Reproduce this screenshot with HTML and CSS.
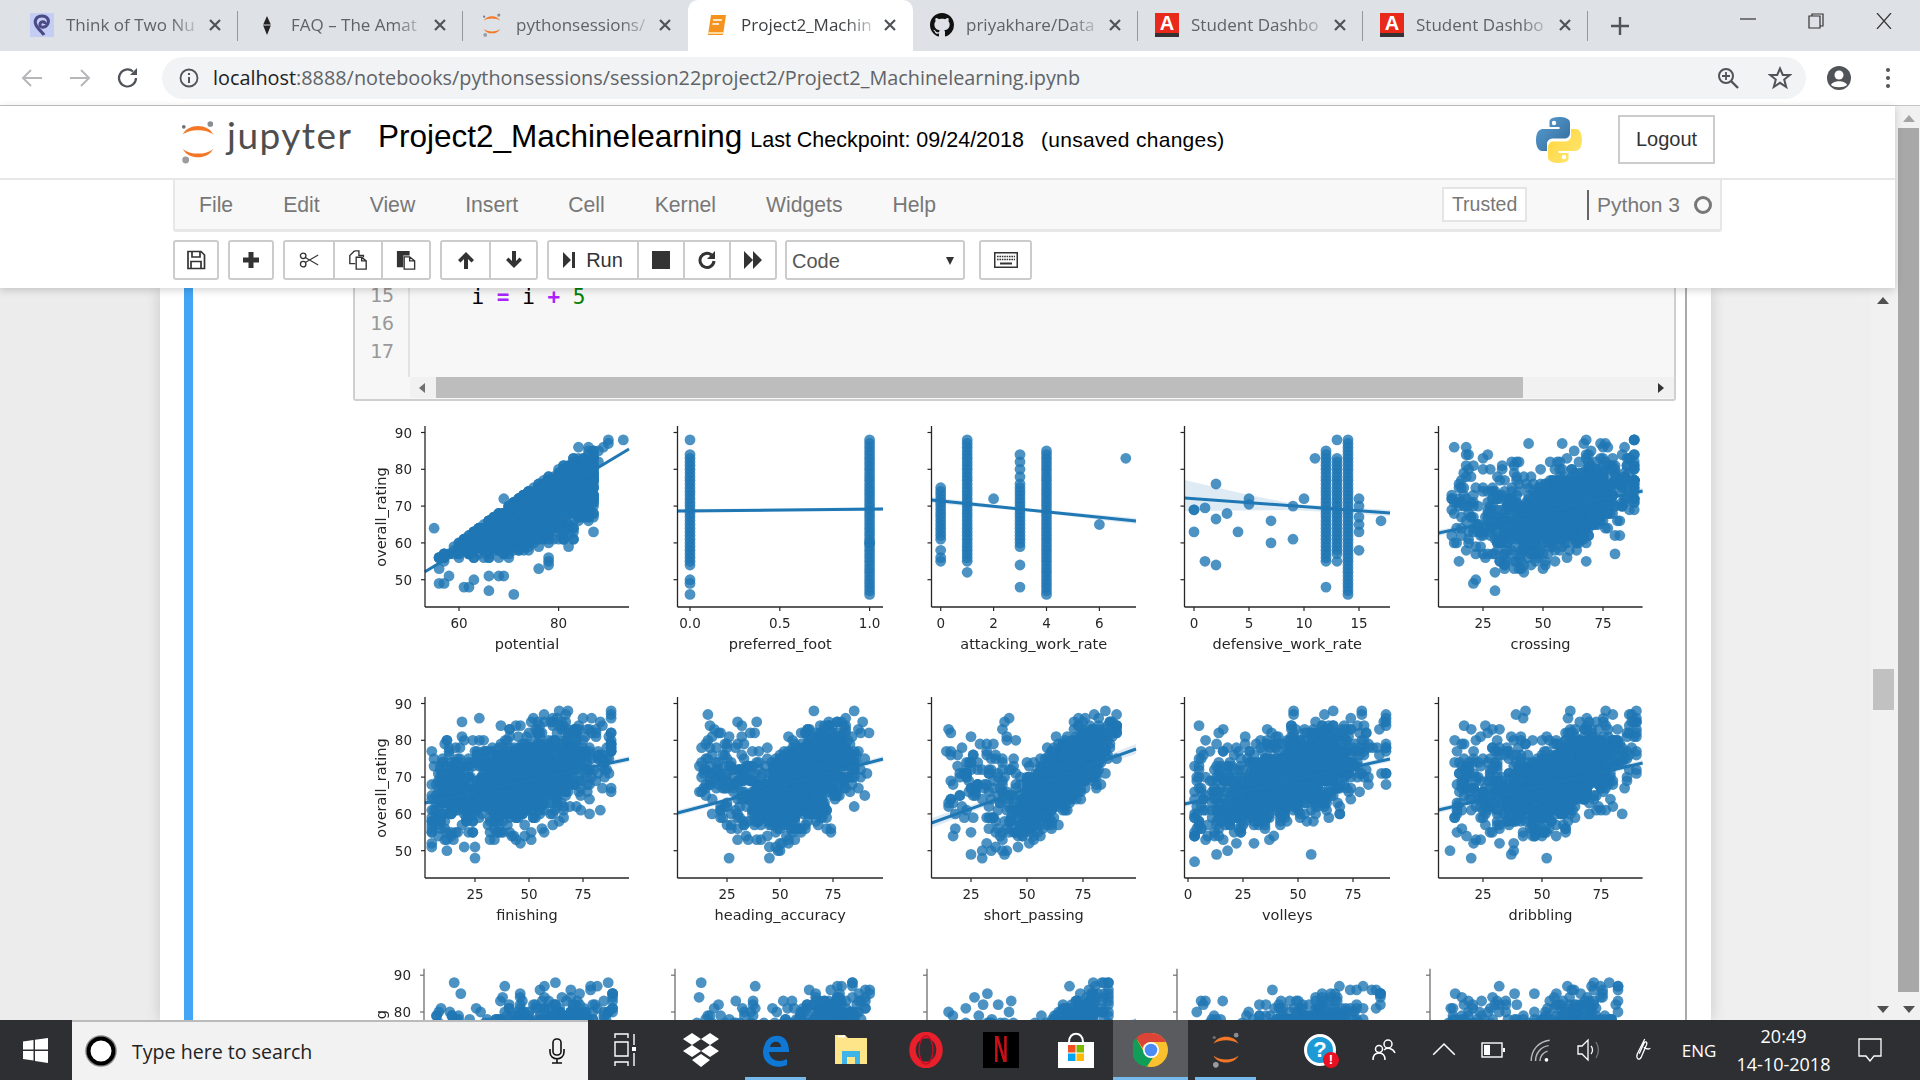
FILE: index.html
```html
<!DOCTYPE html>
<html lang="en">
<head>
<meta charset="utf-8">
<title>Project2_Machinelearning</title>
<link rel="stylesheet" href="styles.css">
</head>
<body>
<svg class="defs" aria-hidden="true">
  <symbol id="jup" viewBox="0 0 38 46">
    <path d="M3 15C8 3 30 3 35 15C28 9 10 9 3 15Z" fill="#f37726"/>
    <path d="M3 30C8 42 30 42 35 30C28 37 10 37 3 30Z" fill="#f37726"/>
    <circle cx="32" cy="4" r="3" fill="#8a8d90"/><circle cx="4" cy="7" r="2" fill="#6f7275"/><circle cx="6" cy="42" r="3.6" fill="#9a9c9f"/>
  </symbol>
  <symbol id="x" viewBox="0 0 14 14"><path d="M2 2L12 12M12 2L2 12" fill="none" stroke="#505358" stroke-width="2.2"/></symbol>
</svg>
<div class="screen">
  <div class="tabstrip">
    <div class="tab">
      <svg class="fav" viewBox="0 0 24 24"><rect width="24" height="24" fill="#c4cdf3"/><path d="M12 3C6 3 4 8 6 12s7 8 8 10M12 3c6 0 8 5 5 9s-8 2-7-1 5-3 5 0" fill="none" stroke="#4b4a86" stroke-width="3"/></svg>
      <span class="tab-title">Think of Two Nu</span><svg class="tab-x"><use href="#x"/></svg>
    </div>
    <div class="tab">
      <svg class="fav" viewBox="0 0 24 24"><path d="M12 3L16 12L12 22L8 12Z" fill="#222"/><path d="M8 12H16" stroke="#ddd" stroke-width="1"/></svg>
      <span class="tab-title">FAQ – The Amat</span><svg class="tab-x"><use href="#x"/></svg>
    </div>
    <div class="tab">
      <svg class="fav"><use href="#jup"/></svg>
      <span class="tab-title">pythonsessions/</span><svg class="tab-x"><use href="#x"/></svg>
    </div>
    <div class="tab tab-active">
      <svg class="fav" viewBox="0 0 24 24"><path d="M6 2H21L18 22H3Z" fill="#f5931e"/><path d="M8 7H17M7.400 11H14" stroke="#fff" stroke-width="1.500"/><path d="M3 20H18" stroke="#fdd9a0" stroke-width="2"/></svg>
      <span class="tab-title">Project2_Machin</span><svg class="tab-x"><use href="#x"/></svg>
    </div>
    <div class="tab">
      <svg class="fav" viewBox="0 0 16 16"><path fill="#111" d="M8 0C3.58 0 0 3.58 0 8c0 3.54 2.29 6.53 5.47 7.59.4.07.55-.17.55-.38 0-.19-.01-.82-.01-1.49-2.01.37-2.53-.49-2.69-.94-.09-.23-.48-.94-.82-1.13-.28-.15-.68-.52-.01-.53.63-.01 1.08.58 1.23.82.72 1.21 1.87.87 2.33.66.07-.52.28-.87.51-1.07-1.78-.2-3.64-.89-3.64-3.95 0-.87.31-1.59.82-2.15-.08-.2-.36-1.02.08-2.12 0 0 .67-.21 2.2.82.64-.18 1.32-.27 2-.27.68 0 1.36.09 2 .27 1.53-1.04 2.2-.82 2.2-.82.44 1.1.16 1.92.08 2.12.51.56.82 1.27.82 2.15 0 3.07-1.87 3.75-3.65 3.95.29.25.54.73.54 1.48 0 1.07-.01 1.93-.01 2.2 0 .21.15.46.55.38A8.013 8.013 0 0016 8c0-4.42-3.58-8-8-8z"/></svg>
      <span class="tab-title">priyakhare/Data</span><svg class="tab-x"><use href="#x"/></svg>
    </div>
    <div class="tab">
      <span class="fav fav-a">A</span>
      <span class="tab-title">Student Dashbo</span><svg class="tab-x"><use href="#x"/></svg>
    </div>
    <div class="tab">
      <span class="fav fav-a">A</span>
      <span class="tab-title">Student Dashbo</span><svg class="tab-x"><use href="#x"/></svg>
    </div>
    <svg class="newtab" viewBox="0 0 18 18"><path d="M9 0V18M0 9H18" stroke="#505358" stroke-width="2.400"/></svg>
    <div class="winctl">
      <svg class="win-i" viewBox="0 0 16 16"><path d="M0 6H16" stroke="#333" stroke-width="1.200"/></svg>
      <svg class="win-i" viewBox="0 0 16 16"><path d="M4 3V1H15V13H12M1 3H12V15H1Z" fill="none" stroke="#333" stroke-width="1.200"/></svg>
      <svg class="win-i" viewBox="0 0 16 16"><path d="M1 0L15 16M15 0L1 16" stroke="#333" stroke-width="1.200"/></svg>
    </div>
  </div>

  <div class="addressbar">
    <svg class="nav-i" viewBox="0 0 24 24"><path d="M22 12H4M11 4L3 12L11 20" fill="none" stroke="#b5b7ba" stroke-width="2"/></svg>
    <svg class="nav-i" viewBox="0 0 24 24"><path d="M2 12H20M13 4L21 12L13 20" fill="none" stroke="#b5b7ba" stroke-width="2"/></svg>
    <svg class="nav-i" viewBox="0 0 24 24"><path d="M20 12A8.500 8.500 0 1 1 17 5.500" fill="none" stroke="#505358" stroke-width="2.200"/><path d="M21 2V9H14Z" fill="#505358"/></svg>
    <div class="omnibox">
      <svg class="info-i" viewBox="0 0 20 20"><circle cx="10" cy="10" r="8.500" fill="none" stroke="#505358" stroke-width="1.800"/><path d="M10 9V15M10 5V7" stroke="#505358" stroke-width="2"/></svg>
      <span class="url"><span class="url-host">localhost</span>:8888/notebooks/pythonsessions/session22project2/Project2_Machinelearning.ipynb</span>
      <svg class="omni-i" viewBox="0 0 24 24"><circle cx="10" cy="10" r="7" fill="none" stroke="#505358" stroke-width="2"/><path d="M15 15L22 22" stroke="#505358" stroke-width="2.400"/><path d="M10 6V14M6 10H14" stroke="#505358" stroke-width="1.800"/></svg>
      <svg class="omni-i" viewBox="0 0 24 24"><path d="M12 2.500L14.800 9H21.800L16.200 13.500L18.200 21L12 16.800L5.800 21L7.800 13.500L2.200 9H9.200Z" fill="none" stroke="#505358" stroke-width="2"/></svg>
    </div>
    <svg class="profile-i" viewBox="0 0 26 26"><circle cx="13" cy="13" r="12" fill="#505358"/><circle cx="13" cy="10" r="4.500" fill="#fff"/><path d="M5 20C7 15 19 15 21 20C18 23 8 23 5 20Z" fill="#fff"/></svg>
    <svg class="menu-i" viewBox="0 0 6 22"><circle cx="3" cy="3" r="2" fill="#505358"/><circle cx="3" cy="11" r="2" fill="#505358"/><circle cx="3" cy="19" r="2" fill="#505358"/></svg>
  </div>

  <div class="viewport">
    <div class="content">
      <header class="nbhead">
        <div class="titlebar">
          <div class="logo">
            <svg class="logo-mark"><use href="#jup"/></svg>
            <span class="logo-text">jupyter</span>
          </div>
          <span class="nbname">Project2_Machinelearning</span>
          <span class="checkpoint">Last Checkpoint: 09/24/2018</span>
          <span class="autosave">(unsaved changes)</span>
          <svg class="pylogo" viewBox="0 0 46 46">
            <defs>
              <linearGradient id="pyb" x1="0" y1="0" x2="1" y2="1"><stop offset="0" stop-color="#5a9fd4"/><stop offset="1" stop-color="#306998"/></linearGradient>
              <linearGradient id="pyy" x1="0" y1="0" x2="1" y2="1"><stop offset="0" stop-color="#ffe873"/><stop offset="1" stop-color="#ffd43b"/></linearGradient>
            </defs>
            <path fill="url(#pyb)" d="M23 0C13 0 13.500 4.500 13.500 4.500V10H23.500V12H7S0 11.500 0 23C0 34 6 34 6 34H11V27.500S10.500 21.500 17 21.500H28S34 21.800 34 16V6S35 0 23 0Z"/>
            <circle cx="18" cy="6" r="2.200" fill="#fff"/>
            <path fill="url(#pyy)" transform="rotate(180 23 23)" d="M23 0C13 0 13.500 4.500 13.500 4.500V10H23.500V12H7S0 11.500 0 23C0 34 6 34 6 34H11V27.500S10.500 21.500 17 21.500H28S34 21.800 34 16V6S35 0 23 0Z"/>
            <circle cx="28" cy="40" r="2.200" fill="#fff"/>
          </svg>
          <span class="logout">Logout</span>
        </div>
        <nav class="menubar">
          <span class="menu-item menu-file">File</span>
          <span class="menu-item">Edit</span>
          <span class="menu-item">View</span>
          <span class="menu-item">Insert</span>
          <span class="menu-item">Cell</span>
          <span class="menu-item">Kernel</span>
          <span class="menu-item">Widgets</span>
          <span class="menu-item">Help</span>
          <span class="trusted">Trusted</span>
          <span class="kernel-name">Python 3</span>
          <span class="kernel-dot"></span>
        </nav>
        <div class="toolbar">
          <div class="btn-group"><span class="tbtn tbtn-46"><svg class="ti" viewBox="0 0 20 20"><path d="M2 1.500H15L18.500 5V18.500H2Z M6 1.500V7H14V1.500 M5 18.500V11.500H15V18.500" fill="none" stroke="#333" stroke-width="1.700"/></svg></span></div>
          <div class="btn-group"><span class="tbtn tbtn-46"><svg class="ti" viewBox="0 0 20 20"><path d="M10 2V18M2 10H18" stroke="#333" stroke-width="5"/></svg></span></div>
          <div class="btn-group">
            <span class="tbtn tbtn-49"><svg class="ti" viewBox="0 0 24 20"><circle cx="5" cy="5" r="3.300" fill="none" stroke="#333" stroke-width="1.600"/><circle cx="5" cy="15" r="3.300" fill="none" stroke="#333" stroke-width="1.600"/><path d="M7.500 7L23 16M7.500 13L23 4" stroke="#333" stroke-width="1.300"/></svg></span>
            <span class="tbtn tbtn-49"><svg class="ti" viewBox="0 0 22 22"><path d="M7 1H12V6H17V8M7 1L2 6V15H8" fill="none" stroke="#333" stroke-width="1.500"/><path d="M9 8H15L20 12V21H9Z M15 8V12H20" fill="#fff" stroke="#333" stroke-width="1.500"/></svg></span>
            <span class="tbtn tbtn-49"><svg class="ti" viewBox="0 0 22 22"><path d="M1 1H15V6H8V19H1Z" fill="#333"/><path d="M9 7.500H15L20.500 12V21H9Z M15 7.500V12H20.500" fill="#fff" stroke="#333" stroke-width="1.500"/></svg></span>
          </div>
          <div class="btn-group">
            <span class="tbtn tbtn-48"><svg class="ti" viewBox="0 0 20 20"><path d="M10 2L18 10L15.500 12.500L12 9V19H8V9L4.500 12.500L2 10Z" fill="#333"/></svg></span>
            <span class="tbtn tbtn-48"><svg class="ti" viewBox="0 0 20 20"><path d="M10 18L18 10L15.500 7.500L12 11V1H8V11L4.500 7.500L2 10Z" fill="#333"/></svg></span>
          </div>
          <div class="btn-group">
            <span class="tbtn tbtn-run"><svg class="ti-small" viewBox="0 0 12 18"><path d="M0 1L8 9L0 17Z M9 1H12V17H9Z" fill="#333"/></svg>Run</span>
            <span class="tbtn tbtn-46"><svg class="ti" viewBox="0 0 20 20"><rect x="1" y="1" width="18" height="18" fill="#333"/></svg></span>
            <span class="tbtn tbtn-46"><svg class="ti" viewBox="0 0 20 20"><path d="M17 11A7 7 0 1 1 14.500 5" fill="none" stroke="#333" stroke-width="3"/><path d="M18 1V9H10Z" fill="#333"/></svg></span>
            <span class="tbtn tbtn-46"><svg class="ti" viewBox="0 0 20 20"><path d="M1 1L10 10L1 19Z M10 1L19 10L10 19Z" fill="#333"/></svg></span>
          </div>
          <div class="celltype"><span>Code</span><span class="caret"></span></div>
          <div class="btn-group"><span class="tbtn tbtn-kb"><svg class="ti-kb" viewBox="0 0 24 16"><rect x="0.750" y="0.750" width="22.500" height="14.500" fill="none" stroke="#333" stroke-width="1.500"/><path d="M3 4.500H21M3 7.500H21" stroke="#333" stroke-width="1.600" stroke-dasharray="1.600 .8"/><path d="M6 11.500H18" stroke="#333" stroke-width="2"/></svg></span></div>
        </div>
      </header>

      <main class="page">
        <div class="notebook">
          <div class="cell">
            <div class="codebox">
              <div class="editor">
                <div class="gutter"><div class="gutter-lines"><div>15</div><div>16</div><div>17</div></div></div>
                <div class="code"><div class="code-lines"><div>    i <b class="op">=</b> i <b class="op">+</b> <span class="num">5</span></div><div>&nbsp;</div><div>&nbsp;</div></div></div>
              </div>
              <div class="hscroll">
                <span class="hs-left"></span>
                <span class="hs-thumb"></span>
                <span class="hs-right"></span>
              </div>
            </div>
            <svg id="figure" class="figure" viewBox="353 401 1330 680"></svg>
          </div>
        </div>
        <div class="page-gap"></div>
        <div class="inner-scroll">
          <span class="arrow-up arrow-dark"></span>
          <span class="inner-thumb"></span>
          <span class="arrow-down arrow-dark"></span>
        </div>
      </main>
    </div>
    <div class="outer-scroll">
      <span class="arrow-up arrow-light"></span>
      <span class="outer-thumb"></span>
      <span class="arrow-down arrow-mid"></span>
    </div>
  </div>

  <footer class="taskbar">
    <div class="start"><svg class="win-logo" viewBox="0 0 25 25"><path fill="#fff" d="M0 3.500L10.500 2V11.500H0ZM12 1.800L25 0V11.500H12ZM0 13H10.500V22.500L0 21ZM12 13H25V25L12 23Z"/></svg></div>
    <div class="search">
      <svg class="cortana" viewBox="0 0 34 34"><circle cx="17" cy="17" r="15" fill="#fff" stroke="#888" stroke-width="1.500"/><circle cx="17" cy="17" r="12.500" fill="#fff" stroke="#000" stroke-width="4"/></svg>
      <span class="search-text">Type here to search</span>
      <svg class="mic" viewBox="0 0 20 26"><rect x="6" y="1" width="8" height="16" rx="3.500" fill="none" stroke="#111" stroke-width="1.600"/><path d="M3 11V14C3 23 17 23 17 14V11M10 20V25M5 25H15" fill="none" stroke="#111" stroke-width="1.600"/></svg>
    </div>
    <div class="apps">
      <div class="app"><svg class="app-i" viewBox="0 0 24 36"><path d="M1 6V2H14V6M1 10H14V24H1ZM1 34V30H14V34M20 2V13M20 21V34" fill="none" stroke="#fff" stroke-width="1.400"/><rect x="18" y="15" width="4" height="4" fill="#fff"/></svg></div>
      <div class="app"><svg class="app-i" viewBox="0 0 36 36"><path fill="#fff" d="M9 1L18 7L9 13L0 7ZM27 1L36 7L27 13L18 7ZM9 13L18 19L9 25L0 19ZM27 13L36 19L27 25L18 19ZM18 22L27 28L18 35L9 28Z"/></svg></div>
      <div class="app app-on"><svg class="app-i" viewBox="0 0 32 36"><path d="M5 12C8 2 28 -2 29 18V20H9C10 29 20 31 27 27V33C15 38 3 32 3 20C3 17 4 14 5 12Z" fill="#0f78d4"/><path d="M10 15H21C21 8 11 8 10 15Z" fill="#2d2f33"/></svg></div>
      <div class="app"><svg class="app-i" viewBox="0 0 32 36"><path d="M0 3H10L13 6H32V32H0Z" fill="#ffe58a"/><path d="M3 4.500H10" stroke="#fff" stroke-width="2"/><path d="M7 32V19H25V32H20V25H12V32Z" fill="#3fb4e8"/></svg></div>
      <div class="app"><svg class="app-i" viewBox="0 0 36 36"><ellipse cx="18" cy="18" rx="13.500" ry="15" fill="none" stroke="#e8202c" stroke-width="6.500"/><ellipse cx="18" cy="18" rx="7" ry="14" fill="none" stroke="#c40e22" stroke-width="1.500"/></svg></div>
      <div class="app"><span class="netflix"><span class="netflix-n">N</span></span></div>
      <div class="app"><svg class="app-i" viewBox="0 0 36 36"><path d="M11 10C11 -1 25 -1 25 10" fill="none" stroke="#fff" stroke-width="2"/><rect y="10" width="36" height="26" fill="#fff"/><rect x="10" y="13" width="7.500" height="7.500" fill="#f25022"/><rect x="18.500" y="13" width="7.500" height="7.500" fill="#7fba00"/><rect x="10" y="21.500" width="7.500" height="7.500" fill="#00a4ef"/><rect x="18.500" y="21.500" width="7.500" height="7.500" fill="#ffb900"/></svg></div>
      <div class="app app-chrome"><svg class="app-i" viewBox="0 0 36 36"><circle cx="18" cy="18" r="17" fill="#fbc02d"/><path d="M18 1A17 17 0 0 1 33 10H18C14 10 10 13 9.500 16L3 6A17 17 0 0 1 18 1Z" fill="#db4437"/><path d="M3 6L11 20C12.500 23.500 16 26 20 25.500L14 34.500A17 17 0 0 1 3 6Z" fill="#109d58"/><circle cx="18" cy="18" r="8" fill="#fff"/><circle cx="18" cy="18" r="6.300" fill="#4b8bf5"/></svg></div>
      <div class="app app-on"><svg class="app-i"><use href="#jup"/></svg></div>
    </div>
    <div class="tray">
      <div class="tray-slot"><span class="help">?<span class="help-badge">!</span></span></div>
      <div class="tray-slot"><svg class="tray-i" viewBox="0 0 24 24"><circle cx="16" cy="6" r="4" fill="none" stroke="#fff" stroke-width="1.500"/><circle cx="7" cy="11" r="3.500" fill="none" stroke="#fff" stroke-width="1.500"/><path d="M1 22C1 17 3 15 7 15C11 15 13 17 13 22M12 12C15 9 21 10 23 15" fill="none" stroke="#fff" stroke-width="1.500"/></svg></div>
      <div class="tray-slot"><svg class="tray-i" viewBox="0 0 20 20"><path d="M1 14L10 5L19 14" fill="none" stroke="#fff" stroke-width="1.300"/></svg></div>
      <div class="tray-slot"><svg class="tray-i" viewBox="0 0 24 16"><rect x="1" y="1" width="20" height="14" fill="none" stroke="#fff" stroke-width="1.400"/><rect x="3" y="3" width="6" height="10" fill="#fff"/><rect x="22" y="6" width="2" height="4" fill="#fff"/></svg></div>
      <div class="tray-slot"><svg class="tray-i" viewBox="0 0 20 22"><path d="M1 21C1 11 8 3 18 2M5 21C5 14 10 8 17 7M9 21C9 17 12 13 16 12" fill="none" stroke="#b9babc" stroke-width="1.300"/><circle cx="15" cy="20" r="1.700" fill="#fff"/></svg></div>
      <div class="tray-slot"><svg class="tray-i" viewBox="0 0 24 22"><path d="M1 7H5L11 1V21L5 15H1Z" fill="none" stroke="#fff" stroke-width="1.300"/><path d="M14 7C16 9 16 13 14 15" fill="none" stroke="#fff" stroke-width="1.300"/><path d="M19 3C22 8 22 14 19 19" fill="none" stroke="#777" stroke-width="1.300"/></svg></div>
      <div class="tray-slot"><svg class="tray-i" viewBox="0 0 20 26"><path d="M13 1L5 17C3 22 7 25 9 21L15 7C16 4 13 3 12 6L7 17M12 10C15 12 18 12 19 11" fill="none" stroke="#fff" stroke-width="1.400"/></svg></div>
      <div class="tray-slot tray-lang">ENG</div>
      <div class="clock"><span>20:49</span><span>14-10-2018</span></div>
      <div class="tray-slot"><svg class="tray-note" viewBox="0 0 24 24"><path d="M1 1H23V18H16L12 23L8 18H1Z" fill="none" stroke="#fff" stroke-width="1.300"/></svg></div>
    </div>
  </footer>
</div>
<script src="script.js"></script>
</body>
</html>
```
FILE: styles.css
```css
* { box-sizing: border-box; }
html, body { margin: 0; padding: 0; }
body { font-family: "Liberation Sans", Arial, sans-serif; overflow: hidden; }
.defs { position: absolute; width: 0; height: 0; }
.screen { width: 1920px; height: 1080px; display: flex; flex-direction: column; overflow: hidden; background: #fff; }

/* tabs */
.tabstrip { height: 51px; flex: none; display: flex; align-items: stretch; padding-left: 13px; background: #dee1e6; font-family: "Open Sans", sans-serif; font-size: 17px; color: #5f6368; }
.tab { width: 225px; flex: none; display: flex; align-items: center; padding: 0 16px 2px 17px; position: relative; }
.tab::after { content: ""; position: absolute; right: 0; top: 11px; height: 30px; width: 1px; background: #94979c; }
.tab-active { background: #fff; color: #3c4043; border-radius: 10px 10px 0 0; }
.tab-active::after { display: none; }
.tab:nth-child(3)::after { display: none; }
.fav { width: 24px; height: 24px; flex: none; margin-right: 12px; }
.fav-a { background: #e8291c; color: #fff; font: bold 20px/20px "Liberation Sans", sans-serif; text-align: center; border-bottom: 4px solid #333; }
.tab-title { flex: 1; min-width: 0; white-space: nowrap; -webkit-mask-image: linear-gradient(90deg, #000 80%, rgba(0,0,0,.25)); mask-image: linear-gradient(90deg, #000 80%, rgba(0,0,0,.25)); }
.tab-x { width: 14px; height: 14px; flex: none; margin-left: 12px; }
.newtab { width: 18px; height: 18px; align-self: center; margin-left: 23px; }
.winctl { margin-left: auto; display: flex; gap: 52px; padding: 13px 28px 0 0; }
.win-i { width: 16px; height: 16px; }

/* address */
.addressbar { height: 55px; flex: none; display: flex; align-items: center; padding: 0 0 1px 20px; border-bottom: 1px solid #c4c4c4; background: #fff; }
.nav-i { width: 24px; height: 24px; flex: none; margin-right: 24px; }
.nav-i:nth-child(3) { margin-right: 22px; }
.omnibox { width: 1644px; height: 42px; flex: none; display: flex; align-items: center; border-radius: 21px; background: #f1f3f4; padding: 0 14px 0 17px; }
.info-i { width: 20px; height: 20px; flex: none; margin-right: 14px; }
.url { flex: 1; white-space: nowrap; font-family: "Open Sans", sans-serif; font-size: 19.830px; color: #5f6368; }
.url-host { color: #202124; }
.omni-i { width: 24px; height: 24px; flex: none; margin-left: 28px; }
.profile-i { width: 26px; height: 26px; flex: none; margin-left: 20px; }
.menu-i { width: 6px; height: 22px; flex: none; margin-left: 33px; }

/* main */
.viewport { flex: 1; min-height: 0; display: flex; background: #eee; }
.content { width: 1895px; flex: none; display: flex; flex-direction: column; min-height: 0; position: relative; }
.nbhead { flex: none; height: 182px; background: #fff; position: relative; z-index: 2; box-shadow: 0 2px 8px rgba(0,0,0,.18); }
.titlebar { height: 74px; display: flex; align-items: center; padding-left: 180px; border-bottom: 2px solid #e7e7e7; color: #000; }
.logo { display: flex; align-items: center; width: 198px; flex: none; }
.logo-mark { width: 36px; height: 46px; flex: none; }
.logo-text { margin-left: 11px; font: 400 37px/1 Lato, sans-serif; letter-spacing: 1.500px; color: #4e4e4e; position: relative; top: -8px; }
.nbname { font-size: 31.500px; margin-right: 8px; position: relative; top: -6px; }
.checkpoint { font-size: 21.500px; margin-right: 17px; position: relative; top: -2px; }
.autosave { font-size: 21px; letter-spacing: .3px; position: relative; top: -2px; }
.pylogo { width: 46px; height: 46px; flex: none; margin-left: auto; position: relative; top: -2px; }
.logout { width: 97px; height: 49px; flex: none; margin: -6px 180px 0 36px; border: 2px solid #ccc; text-align: center; line-height: 45px; font-size: 20px; color: #333; }

.menubar { margin-left: 173px; width: 1549px; height: 52px; position: relative; background: #f8f8f8; border: solid #e7e7e7; border-width: 0 2px 3px 2px; border-radius: 0 0 3px 3px; color: #777; font-size: 21.200px; display: flex; align-items: center; }
.menu-item { margin-left: 50px; }
.menu-file { margin-left: 24px; }
.trusted { margin-left: auto; width: 85px; height: 35px; border: 2px solid #e5e5e5; background: #fff; color: #777; text-align: center; line-height: 31px; font-size: 19.500px; }
.kernel-name { margin-left: 60px; padding-left: 8px; border-left: 2px solid #666; height: 30px; line-height: 30px; font-size: 21px; }
.kernel-dot { width: 18px; height: 18px; border: 3px solid #777; border-radius: 50%; margin: 0 8px 0 14px; }

.toolbar { height: 56px; margin-left: 173px; display: flex; align-items: flex-start; padding-top: 8px; gap: 9px; }
.btn-group { display: flex; height: 40px; border: 2px solid #ccc; border-radius: 3px; background: #fff; }
.tbtn { display: flex; align-items: center; justify-content: center; height: 100%; border-left: 2px solid #ccc; color: #333; font-size: 20px; }
.tbtn:first-child { border-left: 0; }
.tbtn-46 { width: 46px; }
.btn-group:nth-child(1) .tbtn-46, .btn-group:nth-child(2) .tbtn-46 { width: 42px; }
.tbtn-49 { width: 48px; }
.tbtn-48 { width: 47px; }
.tbtn-run { width: 88px; gap: 11px; }
.tbtn-kb { width: 49px; }
.ti { width: 20px; height: 20px; }
.ti-small { width: 12px; height: 18px; }
.ti-kb { width: 24px; height: 16px; }
.celltype { width: 180px; height: 40px; margin-left: -1px; display: flex; align-items: center; justify-content: space-between; padding: 2px 9px 0 5px; border: 2px solid #ccc; border-radius: 3px; color: #555; font-size: 20px; }
.caret { width: 0; height: 0; border: solid transparent; border-width: 8px 4.500px 0; border-top-color: #333; }
.btn-group:last-child { margin-left: 5px; }

.page { flex: 1; min-height: 0; display: flex; overflow: hidden; background: linear-gradient(90deg, #ececec, #efefef); }
.notebook { width: 1551px; margin-left: 160px; flex: none; background: #fff; box-shadow: 0 0 14px rgba(0,0,0,.16); padding-left: 24px; }
.cell { width: 1503px; height: 100%; border-left: 9px solid #42a5f5; border-right: 2px solid #aaa; padding-left: 160px; overflow: hidden; }
.codebox { width: 1323px; height: 113px; background: #f7f7f7; border: solid #cfcfcf; border-width: 0 2px 2px 2px; border-radius: 0 0 3px 3px; display: flex; flex-direction: column; }
.editor { height: 89px; flex: none; display: flex; overflow: hidden; }
.gutter { width: 55px; flex: none; border-right: 2px solid #e2e2e2; font: 20px/28px "DejaVu Sans Mono", monospace; color: #999; text-align: right; padding-right: 14px; }
.gutter-lines { margin-top: -7px; }
.code-lines { margin-top: -5px; }
.code { flex: 1; font: 21px/28px "DejaVu Sans Mono", monospace; color: #000; padding-left: 11px; white-space: pre; }
.op { color: #aa22ff; font-weight: 700; }
.num { color: #008000; }
.hscroll { margin-left: 55px; height: 21px; flex: none; background: #f1f1f1; display: flex; align-items: center; }
.hs-left { width: 0; height: 0; border: solid transparent; border-width: 5px 6px 5px 0; border-right-color: #707070; margin-left: 9px; }
.hs-thumb { width: 1087px; height: 21px; background: #bdbdbd; margin-left: 11px; }
.hs-right { width: 0; height: 0; border: solid transparent; border-width: 5px 0 5px 6px; border-left-color: #333; margin-left: 135px; }
.figure { display: block; width: 1330px; height: 680px; filter: blur(.6px); }
.page-gap { width: 160px; flex: none; }

.inner-scroll { width: 24px; flex: none; background: #f1f1f1; display: flex; flex-direction: column; align-items: center; padding: 9px 0 7px; }
.inner-thumb { width: 21px; height: 41px; margin-top: 365px; background: #c1c1c1; }
.outer-scroll { width: 25px; flex: none; background: #f1f1f1; display: flex; flex-direction: column; align-items: center; padding: 9px 0 7px 2px; }
.outer-thumb { width: 21px; height: 864px; margin-top: 6px; background: #a8a8a8; }
.arrow-up, .arrow-down { width: 0; height: 0; flex: none; border: solid transparent; }
.arrow-up { border-width: 0 6px 7px; }
.arrow-down { border-width: 7px 6px 0; margin-top: auto; }
.arrow-dark.arrow-up { border-bottom-color: #505050; }
.arrow-dark.arrow-down { border-top-color: #505050; }
.arrow-light.arrow-up { border-bottom-color: #a3a3a3; }
.arrow-mid.arrow-down { border-top-color: #505050; }

/* taskbar */
.taskbar { height: 60px; flex: none; display: flex; background: #2d2f33; color: #fff; font-family: "Open Sans", sans-serif; }
.start { width: 72px; flex: none; display: flex; align-items: center; padding-left: 23px; }
.win-logo { width: 25px; height: 25px; }
.search { width: 516px; flex: none; display: flex; align-items: center; padding: 0 21px 0 12px; background: #f2f2f2; border-top: 2px solid #bbb; color: #222; font-size: 19.600px; }
.cortana { width: 34px; height: 34px; flex: none; }
.search-text { margin-left: 14px; flex: 1; }
.mic { width: 20px; height: 26px; flex: none; }
.apps { display: flex; flex: none; }
.app { width: 75px; height: 60px; position: relative; display: flex; align-items: center; justify-content: center; }
.app-i { width: 36px; height: 36px; }
.app-on::after { content: ""; position: absolute; bottom: 0; left: 7px; right: 7px; height: 3px; background: #76b9ed; }
.app-chrome { background: #5a5b5e; }
.app-chrome::after { content: ""; position: absolute; bottom: 0; left: 0; right: 0; height: 3px; background: #76b9ed; }
.netflix { width: 36px; height: 36px; background: #000; color: #c8101a; font: bold 36px/36px "Liberation Sans", sans-serif; text-align: center; display: block; }
.netflix-n { display: inline-block; transform: scaleX(.55); }
.tray { margin-left: auto; padding-right: 23px; display: grid; grid-template-columns: 60px 68px 52px 45px 52px 43px 64px 50px 119px 54px; align-items: center; }
.tray-slot { display: flex; justify-content: center; align-items: center; }
.tray-i { width: 24px; height: 24px; }
.tray-note { width: 24px; height: 24px; }
.tray-lang { font-size: 17px; }
.clock { display: flex; flex-direction: column; align-items: center; gap: 7px; font-size: 18px; line-height: 21px; }
.help { width: 32px; height: 32px; position: relative; border-radius: 50%; background: #1d9ad6; border: 3px solid #fff; color: #fff; font: bold 22px/26px "Liberation Sans", sans-serif; text-align: center; }
.help-badge { position: absolute; right: -6px; bottom: -5px; width: 16px; height: 16px; border-radius: 50%; background: #e81123; font-size: 13px; line-height: 16px; }
```
FILE: script.js
```js
(function () {
  var NS = 'http://www.w3.org/2000/svg';
  var svg = document.getElementById('figure');
  var COLOR = '#1f77b4';

  function rng(seed) {
    return function () {
      seed |= 0; seed = seed + 0x6D2B79F5 | 0;
      var t = Math.imul(seed ^ seed >>> 15, 1 | seed);
      t = t + Math.imul(t ^ t >>> 7, 61 | t) ^ t;
      return ((t ^ t >>> 14) >>> 0) / 4294967296;
    };
  }
  function el(name, attrs, text) {
    var e = document.createElementNS(NS, name);
    for (var k in attrs) e.setAttribute(k, attrs[k]);
    if (text !== undefined) e.textContent = text;
    svg.appendChild(e);
    return e;
  }
  function normal(r) { return Math.sqrt(-2 * Math.log(r() + 1e-9)) * Math.cos(6.28318 * r()); }
  function ratings(r, n) {
    var out = [];
    for (var i = 0; i < n; i++) {
      var v = Math.round(69.5 + normal(r) * 7);
      if (v < 46 || v > 88) { i--; continue; }
      out.push(v);
    }
    return out;
  }
  function cloud(o) {
    return function (r) {
      return ratings(r, o.n || 1150).map(function (v) {
        var x;
        if (r() < o.low) x = o.lo + r() * (o.hi - o.lo);
        else x = o.m + o.k * (v - 68) + normal(r) * o.s;
        x = Math.max(o.min, Math.min(o.max, Math.round(x)));
        return [x, v];
      });
    };
  }
  function columns(list) {
    return function () {
      var out = [];
      list.forEach(function (c) {
        var x = c[0];
        c.slice(1).forEach(function (seg) {
          if (seg.length === 1) { out.push([x, seg[0]]); return; }
          for (var v = seg[0]; v <= seg[1]; v++) out.push([x, v]);
        });
      });
      return out;
    };
  }
  function potential(r) {
    var out = ratings(r, 1500).map(function (v) {
      if (v < 56) v += 6;
      return [Math.round(v + Math.abs(normal(r)) * 8.5), v];
    }).filter(function (p) { return p[0] <= 87; });
    return out.concat([[55,64],[56,49],[57,49],[58,51],[61,48],[62,48],[63,50],[66,47],[71,46],[69,72],
      [56,56],[57,57],[66,51],[68,51],[69,51],[76,53],[78,54],[78,55],[82,59],[87,63],[86,67],[87,68],[87,70],[87,72],[87,75],
      [90,88],[93,88],[89,86],[90,87],[84,86],[86,85],[87,85],[88,85],[88,82]]);
  }

  var P = 3.68;
  var clouds = {
    finishing: cloud({ low: .08, lo: 6, hi: 20, m: 46, k: 1.3, s: 17, min: 5, max: 88 }),
    heading: cloud({ low: .14, lo: 12, hi: 40, m: 60, k: .9, s: 10.500, min: 10, max: 92 }),
    passing: cloud({ low: .1, lo: 14, hi: 46, m: 63, k: 1.2, s: 6.500, min: 12, max: 90 }),
    volleys: cloud({ low: .05, lo: 3, hi: 18, m: 44, k: 1.4, s: 15, min: 3, max: 90 }),
    dribbling: cloud({ low: .17, lo: 12, hi: 44, m: 57, k: 1.1, s: 10.500, min: 10, max: 90 }),
    crossing: cloud({ low: .17, lo: 12, hi: 46, m: 58, k: 1.2, s: 11, min: 10, max: 88 })
  };

  var rows = [
    { off: 0, plots: [
      { ax: 425, r: 629, label: 'potential', data: potential, t: [[60,459],[80,558.6]], line: [571.7,449], band: 1, ticks: ['60','80'] },
      { ax: 677.5, r: 883, label: 'preferred_foot', t: [[0,690],[1,869.6]], line: [511,509], band: 2, ticks: ['0.0','0.5','1.0'], tv: [0,.5,1],
        data: columns([[0,[46],[49],[50],[54,84],[88]],[1,[46,60],[60,88]]]) },
      { ax: 931.5, r: 1136, label: 'attacking_work_rate', t: [[0,940.7],[2,993.6]], line: [500,521], band: 3, ticks: ['0','2','4','6'], tv: [0,2,4,6],
        data: columns([[0,[55],[56],[58],[61,75]],[1,[52],[55,88]],[2,[72]],[3,[48],[54],[59,76],[78],[80],[82],[84]],[4,[46,84],[85]],[6,[65]],[7,[83]]]) },
      { ax: 1184.5, r: 1390, label: 'defensive_work_rate', t: [[0,1194],[5,1249]], line: [498,513], band: 0, ticks: ['0','5','10','15'], tv: [0,5,10,15],
        data: columns([[0,[63],[69],[69]],[1,[55],[69.5]],[2,[54],[66.500],[76]],[3,[68]],[4,[63]],[5,[70.500],[72]],[7,[60],[66]],[9,[61],[70]],[10,[72]],[11,[83]],[12,[48],[55,85]],[13,[55],[57,83],[88]],[14,[46,88]],[15,[58],[63],[65],[67],[70],[72]],[17,[66]]]) },
      { ax: 1438.5, r: 1642.6, label: 'crossing', data: clouds.crossing, t: [[25,1483],[50,1543]], line: [533,491], band: 3, ticks: ['25','50','75'], tv: [25,50,75] }
    ]},
    { off: 271, plots: [
      { ax: 425, r: 629, label: 'finishing', data: clouds.finishing, t: [[25,475],[50,529]], line: [532,488], band: 3, ticks: ['25','50','75'], tv: [25,50,75] },
      { ax: 677.5, r: 883, label: 'heading_accuracy', data: clouds.heading, t: [[25,727],[50,780]], line: [542,488], band: 3, ticks: ['25','50','75'], tv: [25,50,75] },
      { ax: 931.5, r: 1136, label: 'short_passing', data: clouds.passing, t: [[25,971],[50,1027]], line: [552,478], band: 5, ticks: ['25','50','75'], tv: [25,50,75] },
      { ax: 1184.5, r: 1390, label: 'volleys', data: clouds.volleys, t: [[0,1188],[25,1243]], line: [533,488], band: 3, ticks: ['0','25','50','75'], tv: [0,25,50,75] },
      { ax: 1438.5, r: 1642.6, label: 'dribbling', data: clouds.dribbling, t: [[25,1483],[50,1542]], line: [539,492], band: 3, ticks: ['25','50','75'], tv: [25,50,75] }
    ]},
    { off: 542.7, plots: [
      { ax: 424, r: 629, data: clouds.finishing, t: [[25,474],[50,529]], line: [532,488], band: 3 },
      { ax: 675, r: 883, data: clouds.heading, t: [[25,725],[50,779]], line: [542,488], band: 3 },
      { ax: 927, r: 1136, data: clouds.passing, t: [[25,968],[50,1022]], line: [552,478], band: 3 },
      { ax: 1177, r: 1390, data: clouds.volleys, t: [[0,1186],[25,1240]], line: [533,488], band: 3 },
      { ax: 1430, r: 1642, data: clouds.dribbling, t: [[25,1475],[50,1530]], line: [539,492], band: 3 }
    ]}
  ];

  rows.forEach(function (row, ri) {
    var bottom = 607 + row.off;
    var top = 426 + row.off;
    row.plots.forEach(function (p, ci) {
      var r = rng(1000 + ri * 37 + ci * 101);
      var kx = (p.t[1][1] - p.t[0][1]) / (p.t[1][0] - p.t[0][0]);
      var bx = p.t[0][1] - p.t[0][0] * kx;
      var g = el('g', { fill: COLOR, 'fill-opacity': .8 });
      p.data(r).forEach(function (d) {
        var c = document.createElementNS(NS, 'circle');
        c.setAttribute('cx', (bx + d[0] * kx).toFixed(1));
        c.setAttribute('cy', (579.7 + row.off - (d[1] - 50) * P).toFixed(1));
        c.setAttribute('r', 5.4);
        g.appendChild(c);
      });
      var y0 = p.line[0] + row.off;
      var y1 = p.line[1] + row.off;
      var bw = p.band;
      var pts = p.band === 0
        ? [[p.ax, y0 - 18], [p.ax + 60, y0 - 4], [p.ax + 110, y0 + 6], [p.r, y1 - 3], [p.r, y1 + 3], [p.ax + 110, y0 + 12], [p.ax, y0 + 13]]
        : [[p.ax, y0 - bw], [(p.ax + p.r) / 2, (y0 + y1) / 2 - 1.5], [p.r, y1 - bw], [p.r, y1 + bw], [(p.ax + p.r) / 2, (y0 + y1) / 2 + 1.5], [p.ax, y0 + bw]];
      el('polygon', { points: pts.map(function (q) { return q.join(','); }).join(' '), fill: COLOR, 'fill-opacity': .15 });
      el('line', { x1: p.ax, y1: y0, x2: p.r, y2: y1, stroke: COLOR, 'stroke-width': 3 });
      var axisColor = ri === 2 ? '#6e6e6e' : '#262626';
      el('line', { x1: p.ax, y1: top, x2: p.ax, y2: bottom, stroke: axisColor, 'stroke-width': 1.3 });
      el('line', { x1: p.ax, y1: bottom, x2: p.r, y2: bottom, stroke: axisColor, 'stroke-width': 1.3 });
      [90, 80, 70, 60, 50].forEach(function (v) {
        var y = 579.7 + row.off - (v - 50) * P;
        el('line', { x1: p.ax - 4, y1: y, x2: p.ax, y2: y, stroke: axisColor, 'stroke-width': 1.2 });
        if (ci === 0) el('text', { x: p.ax - 13, y: y + 5, 'text-anchor': 'end', 'class': 'fig-text' }, String(v));
      });
      if (ci === 0) {
        var cy = 517 + row.off;
        el('text', { x: 386, y: cy, 'text-anchor': 'middle', 'class': 'fig-label', transform: 'rotate(-90 386 ' + cy + ')' }, 'overall_rating');
      }
      if (p.label) {
        var tv = p.tv || [60, 80];
        tv.forEach(function (v, i) {
          var x = bx + v * kx;
          el('line', { x1: x, y1: bottom, x2: x, y2: bottom + 4, stroke: axisColor, 'stroke-width': 1.2 });
          el('text', { x: x, y: bottom + 21, 'text-anchor': 'middle', 'class': 'fig-text' }, p.ticks[i]);
        });
        el('text', { x: (p.ax + p.r) / 2, y: bottom + 42, 'text-anchor': 'middle', 'class': 'fig-label' }, p.label);
      }
    });
  });
  var style = document.createElementNS(NS, 'style');
  style.textContent = '.fig-text{font:13.5px "DejaVu Sans",sans-serif;fill:#262626}.fig-label{font:14.5px "DejaVu Sans",sans-serif;fill:#262626}';
  svg.appendChild(style);
})();
```
